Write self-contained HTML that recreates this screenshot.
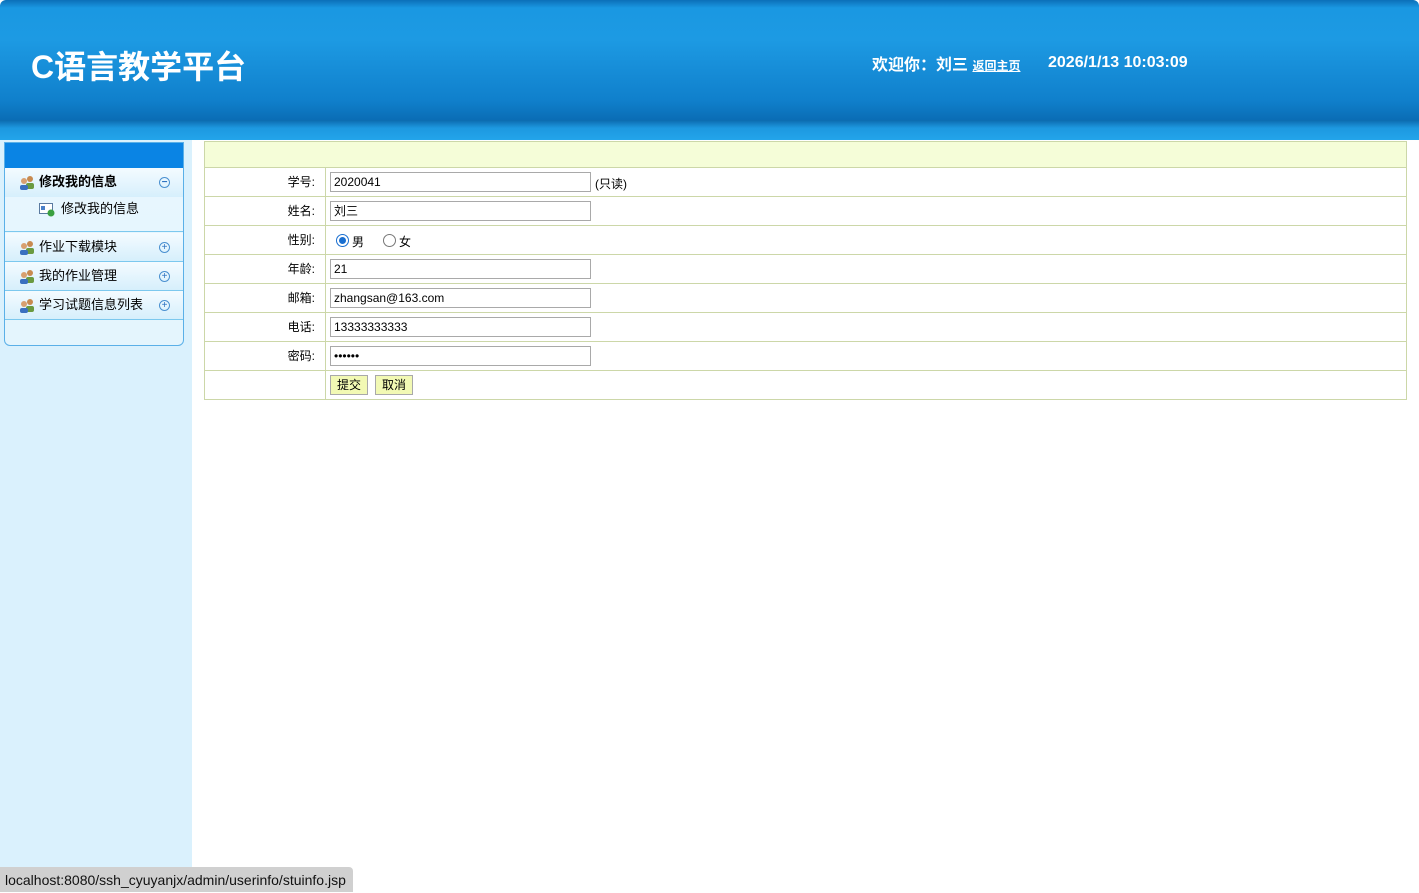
<!DOCTYPE html>
<html><head><meta charset="utf-8"><style>
*{margin:0;padding:0;box-sizing:border-box}
body{width:1419px;height:892px;overflow:hidden;position:relative;background:#fff;font-family:"Liberation Sans","Noto Sans CJK SC",sans-serif;font-size:12px;color:#000}
.hdr{position:absolute;left:0;top:0;width:1419px;height:120px;background:linear-gradient(#0b6fb8 0,#1a98e2 8px,#1d9ae3 40px,#1080cc 100px,#0a6db5 120px);border-radius:6px 6px 0 0}
.band{position:absolute;left:0;top:120px;width:1419px;height:20px;background:linear-gradient(#0c6aae,#1d98e0 8px,#23a4ea 20px)}
.title{position:absolute;left:31px;top:42px;color:#fff;font-size:32px;font-weight:bold}
.wel{position:absolute;left:872px;top:51px;color:#fff;font-size:16px;font-weight:bold}
.wel a{color:#fff;font-size:12px;text-decoration:underline}
.time{position:absolute;left:1048px;top:54px;color:#fff;font-size:16px;font-weight:bold}
.side{position:absolute;left:0;top:140px;width:192px;height:752px;background:#daf1fd}
.panel{position:absolute;left:4px;top:142px;width:180px;height:204px;border:1px solid #5ab0e8;border-radius:0 0 6px 6px;background:linear-gradient(#e8f6fe,#e4f5fd);overflow:hidden}
.pt{height:25px;background:#0a84e4}
.it{position:absolute;left:0;width:178px;height:29px;border-bottom:1px solid #7cc8ee;background:linear-gradient(#f4fbff,#d6effc);font-size:13px;line-height:28px;padding-left:34px}
.ic{position:absolute;left:14px;top:7px;width:16px;height:15px}
.pm{position:absolute;right:13px;top:9px;width:11px;height:11px;border:1px solid #4a90d0;border-radius:50%;color:#2a70c0;font-size:10px;line-height:9px;text-align:center}
.tbl{position:absolute;left:204px;top:141px;width:1203px;height:259px;border:1px solid #ccd7a8}
.row{position:absolute;left:0;width:1201px;height:29px;border-top:1px solid #ccd7a8}
.lab{position:absolute;left:0;width:121px;height:28px;border-right:1px solid #ccd7a8;text-align:right;padding-right:10px;line-height:29px}
.inp{position:absolute;left:125px;top:4px;width:261px;height:20px;border:1px solid #a9a9a9;padding-left:3px;line-height:19px;font-size:12px}
.btn{position:absolute;top:4px;height:20px;border:1px solid #a9a9a9;background:#f2f9b4;line-height:19px;padding:0 6px;font-size:12px}
.status{position:absolute;left:0;top:867px;width:353px;height:25px;background:#d0d0d0;border-radius:0 4px 0 0;font-size:14px;line-height:26px;padding-left:5px;color:#111}
</style></head><body>
<div class="hdr"></div><div class="band"></div>
<div class="title">C语言教学平台</div>
<div class="wel">欢迎你：刘三 <a>返回主页</a></div>
<div class="time">2026/1/13 10:03:09</div>
<div class="side"></div>
<div class="panel"><div class="pt"></div>
<div class="it" style="top:25px;font-weight:bold;border-bottom:none"><svg class="ic" viewBox="0 0 16 15"><circle cx="11" cy="4" r="3" fill="#c88a50"/><rect x="7" y="8" width="8" height="6" rx="2" fill="#6a9a40"/><circle cx="5" cy="6" r="3" fill="#d8a070"/><rect x="1" y="10" width="8" height="5" rx="2" fill="#3a70c0"/></svg>修改我的信息<div class="pm">−</div></div>
<div style="position:absolute;top:54px;left:0;width:178px;height:35px;border-bottom:1px solid #7cc8ee;font-size:13px;padding-left:56px;line-height:24px"><svg style="position:absolute;left:34px;top:5px" width="16" height="15" viewBox="0 0 16 15"><rect x="0.5" y="1.5" width="13" height="10" fill="#fff" stroke="#5a7aa0"/><rect x="2" y="4" width="4" height="4" fill="#4a80c8"/><circle cx="12" cy="11" r="3.5" fill="#3aa040"/></svg>修改我的信息</div>
<div class="it" style="top:90px"><svg class="ic" viewBox="0 0 16 15"><circle cx="11" cy="4" r="3" fill="#c88a50"/><rect x="7" y="8" width="8" height="6" rx="2" fill="#6a9a40"/><circle cx="5" cy="6" r="3" fill="#d8a070"/><rect x="1" y="10" width="8" height="5" rx="2" fill="#3a70c0"/></svg>作业下载模块<div class="pm">+</div></div>
<div class="it" style="top:119px"><svg class="ic" viewBox="0 0 16 15"><circle cx="11" cy="4" r="3" fill="#c88a50"/><rect x="7" y="8" width="8" height="6" rx="2" fill="#6a9a40"/><circle cx="5" cy="6" r="3" fill="#d8a070"/><rect x="1" y="10" width="8" height="5" rx="2" fill="#3a70c0"/></svg>我的作业管理<div class="pm">+</div></div>
<div class="it" style="top:148px"><svg class="ic" viewBox="0 0 16 15"><circle cx="11" cy="4" r="3" fill="#c88a50"/><rect x="7" y="8" width="8" height="6" rx="2" fill="#6a9a40"/><circle cx="5" cy="6" r="3" fill="#d8a070"/><rect x="1" y="10" width="8" height="5" rx="2" fill="#3a70c0"/></svg>学习试题信息列表<div class="pm">+</div></div>
</div>
<div class="tbl">
<div style="height:25px;background:#f5fdd8"></div>
<div class="row" style="top:25px"><div class="lab">学号:</div><div class="inp">2020041</div><span style="position:absolute;left:390px;top:7px">(只读)</span></div>
<div class="row" style="top:54px"><div class="lab">姓名:</div><div class="inp">刘三</div></div>
<div class="row" style="top:83px"><div class="lab">性别:</div>
<span style="position:absolute;left:131px;top:8px;width:13px;height:13px;border:1px solid #1a6fd0;border-radius:50%;"><span style="position:absolute;left:2px;top:2px;width:7px;height:7px;border-radius:50%;background:#1a6fd0"></span></span><span style="position:absolute;left:147px;top:7px">男</span>
<span style="position:absolute;left:178px;top:8px;width:13px;height:13px;border:1px solid #777;border-radius:50%"></span><span style="position:absolute;left:194px;top:7px">女</span></div>
<div class="row" style="top:112px"><div class="lab">年龄:</div><div class="inp">21</div></div>
<div class="row" style="top:141px"><div class="lab">邮箱:</div><div class="inp">zhangsan@163.com</div></div>
<div class="row" style="top:170px"><div class="lab">电话:</div><div class="inp">13333333333</div></div>
<div class="row" style="top:199px"><div class="lab">密码:</div><div class="inp">••••••</div></div>
<div class="row" style="top:228px"><div class="lab"></div><div class="btn" style="left:125px">提交</div><div class="btn" style="left:170px">取消</div></div>
</div>
<div class="status">localhost:8080/ssh_cyuyanjx/admin/userinfo/stuinfo.jsp</div>
</body></html>
